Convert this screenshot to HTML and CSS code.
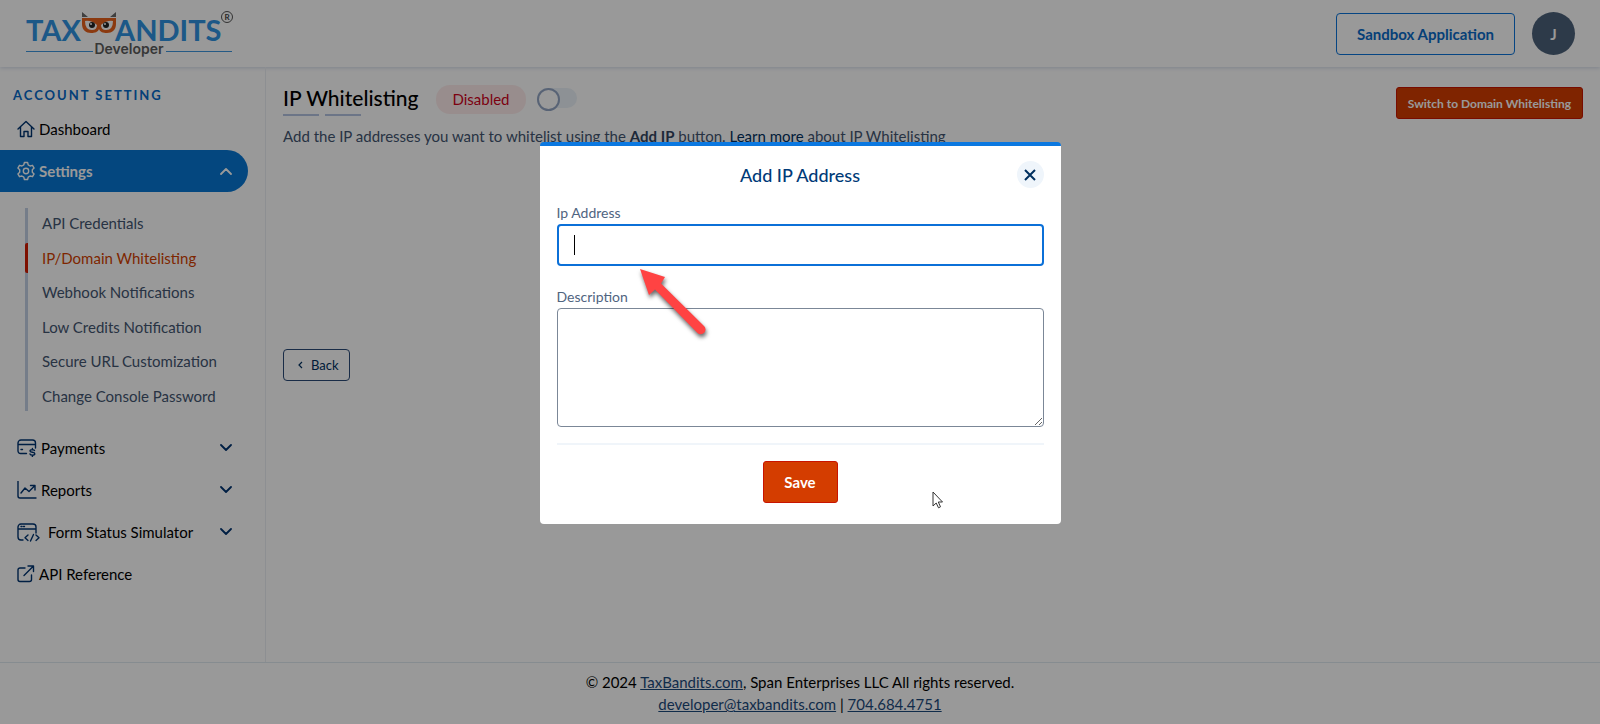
FILE: index.html
```html
<!DOCTYPE html>
<html lang="en">
<head>
<meta charset="utf-8">
<title>IP Whitelisting</title>
<link rel="stylesheet" href="styles.css">
</head>
<body>
<header class="header">
  <a class="logo" href="#" aria-label="TaxBandits Developer">
    <svg width="208" height="48" viewBox="0 0 208 48">
      <g class="logo-word"><text x="0" y="31">TAX</text><text x="89" y="31">ANDITS</text></g>
      <path d="M56 2l6 5h-6zM90 2l-6 5h6z" fill="#6b6b6b"/>
      <path d="M56 8h34v6c0 6-4 9-9 9-4 0-7-1-8-4-1 3-4 4-8 4-5 0-9-3-9-9z" fill="#e8611c"/>
      <path d="M59 11q6-1 12 4 0 5-5 5-7 0-7-9zM87 11q-6-1-12 4 0 5 5 5 7 0 7-9z" fill="#fff"/>
      <circle cx="66" cy="15" r="3" fill="#222"/><circle cx="80" cy="15" r="3" fill="#222"/>
      <circle cx="65" cy="14" r="1" fill="#fff"/><circle cx="79" cy="14" r="1" fill="#fff"/>
      <circle cx="201" cy="7" r="5.500" fill="none" stroke="#555"/>
      <text class="logo-mark" x="201" y="10" text-anchor="middle">R</text>
      <path d="M0 41.500h67M140 41.500h66" stroke="#3f97de"/>
      <text class="logo-sub" x="103" y="44" text-anchor="middle">Developer</text>
    </svg>
  </a>
  <div class="header-actions">
    <a class="btn-outline" href="#">Sandbox Application</a>
    <button class="avatar" type="button">J</button>
  </div>
</header>
<div class="body">
  <nav class="sidebar">
    <h2 class="side-title">ACCOUNT SETTING</h2>
    <a class="nav-item" href="#">
      <svg class="icon" width="18" height="18" viewBox="0 0 18 18"><path d="M1 9l8-7.500L17 9M3.500 7v9.500h3.500v-5h4v5h3.500V7"/></svg>
      <span>Dashboard</span></a>
    <a class="nav-item nav-active" href="#">
      <svg class="icon" width="18" height="20" viewBox="0 0 18 20"><path d="M7.400 1.500h3.200l.6 2.400 1.900 1.100 2.400-.7 1.600 2.800-1.800 1.700v2.400l1.800 1.700-1.600 2.800-2.400-.7-1.900 1.100-.6 2.400H7.400l-.6-2.400L4.900 15l-2.400.7-1.600-2.800 1.800-1.700V8.800L.9 7.100l1.600-2.800 2.400.7 1.900-1.100z"/><circle cx="9" cy="10" r="2.700"/></svg>
      <span>Settings</span>
      <svg class="icon chev" width="12" height="8" viewBox="0 0 12 8"><path d="M1 7l5-5 5 5"/></svg></a>
    <div class="submenu">
      <a href="#">API Credentials</a>
      <a class="sub-active" href="#">IP/Domain Whitelisting</a>
      <a href="#">Webhook Notifications</a>
      <a href="#">Low Credits Notification</a>
      <a href="#">Secure URL Customization</a>
      <a href="#">Change Console Password</a>
    </div>
    <a class="nav-item" href="#">
      <svg class="icon" width="20" height="18" viewBox="0 0 20 18"><path d="M9.500 14.500H4A2.500 2.500 0 0 1 1 12V4a3 3 0 0 1 3-3h11.500a3 3 0 0 1 3 3v5M1 5.500h17.500M4 10.500h1.500M17.500 11.500c-.5-1-4.500-1.500-4.500.5 0 1.800 4.800.8 4.800 2.700 0 1.900-4.300 1.700-4.800.3M15.400 9.500v1.200M15.400 16.200v1.500"/></svg>
      <span>Payments</span>
      <svg class="icon chev" width="12" height="8" viewBox="0 0 12 8"><path d="M1 1l5 5 5-5"/></svg></a>
    <a class="nav-item" href="#">
      <svg class="icon" width="20" height="18" viewBox="0 0 20 18"><path d="M1 0v15q0 2 2 2h16M4 12l4-5 4 3.500 6-6M13.500 4.500h4.500V9"/></svg>
      <span>Reports</span>
      <svg class="icon chev" width="12" height="8" viewBox="0 0 12 8"><path d="M1 1l5 5 5-5"/></svg></a>
    <a class="nav-item" href="#">
      <svg class="icon icon-wide" width="23" height="19" viewBox="0 0 23 19"><path d="M6 17H4a3 3 0 0 1-3-3V4a3 3 0 0 1 3-3h12a3 3 0 0 1 3 3v6M1 6h18M4 3.500h1M6.500 3.500h1M11 12l-3 2.700 3 2.700M19 12l3 2.700-3 2.700M16.500 11.500l-3 6.500"/></svg>
      <span>Form Status Simulator</span>
      <svg class="icon chev" width="12" height="8" viewBox="0 0 12 8"><path d="M1 1l5 5 5-5"/></svg></a>
    <a class="nav-item" href="#">
      <svg class="icon" width="18" height="18" viewBox="0 0 18 18"><path d="M8 3H3a2 2 0 0 0-2 2v9.500a2 2 0 0 0 2 2h9.500a2 2 0 0 0 2-2V10M11 1h5.500v5.500M16.500 1L7 10.500"/></svg>
      <span>API Reference</span></a>
  </nav>
  <main class="main">
    <div class="title-row">
      <h1 class="title">IP Whitelisting</h1>
      <label class="status" for="wl">Disabled</label>
      <input class="toggle" type="checkbox" id="wl">
      <button class="btn-red btn-switch" type="button">Switch to Domain Whitelisting</button>
    </div>
    <p class="desc">Add the IP addresses you want to whitelist using the <b>Add IP</b> button. <a href="#">Learn more</a> about IP Whitelisting</p>
    <button class="btn-back" type="button">
      <svg class="icon-back" width="5" height="8" viewBox="0 0 5 8"><path d="M4 1L1 4l3 3"/></svg>
      Back</button>
  </main>
</div>
<footer class="footer">
  <div>© 2024 <a href="#">TaxBandits.com</a>, Span Enterprises LLC All rights reserved.</div>
  <div><a href="#">developer@taxbandits.com</a> | <a href="#">704.684.4751</a></div>
</footer>
<div class="overlay">
  <form class="modal" role="dialog" aria-labelledby="mt">
    <div class="modal-head">
      <h2 class="modal-title" id="mt">Add IP Address</h2>
      <button class="close" type="button" aria-label="Close"><svg width="12" height="12" viewBox="0 0 12 12"><path d="M1 1l10 10M11 1L1 11"/></svg></button>
    </div>
    <label class="label" for="ip">Ip Address</label>
    <div class="field"><input class="input" id="ip" type="text"><span class="caret"></span></div>
    <label class="label" for="ds">Description</label>
    <textarea class="area" id="ds"></textarea>
    <div class="modal-foot"><button class="btn-red btn-save" type="button">Save</button></div>
    <svg class="arrow" width="80" height="78" viewBox="0 0 80 78"><path d="M4 3L29 11L25 17.500L68 60A4.500 4.500 0 0 1 61.500 67L19 23.500L13 29Z"/></svg>
    <svg class="cursor" width="12" height="18" viewBox="0 0 12 18"><path d="M1 1v14l3.200-3 2.300 4.800 2-1L6.300 11H10.500z"/></svg>
  </form>
</div>
</body>
</html>
```
FILE: styles.css
```css
* { box-sizing: border-box; }
body {
  margin: 0;
  min-height: 100vh;
  display: flex;
  flex-direction: column;
  background: #fff;
  color: #000;
  font-family: Lato, "Open Sans", sans-serif;
  font-size: 15px;
  line-height: 22px;
}
button, input, textarea { font-family: inherit; font-size: inherit; }
a { color: inherit; text-decoration: none; }

.header {
  display: flex;
  align-items: center;
  justify-content: space-between;
  height: 67px;
  padding: 0 25px 0 26px;
  box-shadow: 0 1px 4px #d3dcea;
}
.logo { display: flex; }
.logo-word { font-size: 29px; font-weight: 700; fill: #2f93e2; }
.logo-mark { font-size: 8px; font-weight: 700; fill: #444; }
.logo-sub { font-family: Inter, sans-serif; font-size: 14px; font-weight: 600; fill: #5c5c5c; }
.header-actions { display: flex; align-items: center; gap: 17px; }
.btn-outline {
  padding: 9px 20px;
  border: 1px solid #0a74da;
  border-radius: 4px;
  color: #0a6bc8;
  font-weight: 700;
}
.avatar {
  width: 43px;
  height: 43px;
  padding: 0;
  border: 0;
  border-radius: 50%;
  background: #4c617a;
  color: #fff;
  font-weight: 700;
}

.body { flex: 1; display: flex; }
.sidebar { width: 266px; padding-top: 17px; border-right: 1px solid #eceff4; }
.side-title {
  margin: 0 0 2px 13px;
  color: #0669c8;
  font-size: 13px;
  font-weight: 700;
  letter-spacing: 2px;
}
.nav-item {
  display: flex;
  align-items: center;
  gap: 4px;
  height: 42px;
  margin-right: 17px;
  padding: 0 16px 0 17px;
  font-size: 15px;
}
.icon { fill: none; stroke: #003471; stroke-width: 1.4; stroke-linecap: round; stroke-linejoin: round; }
.icon-wide { margin-right: 4px; }
.chev { margin-left: auto; stroke-width: 1.8; }
.nav-active { border-radius: 0 21px 21px 0; background: #0777d4; color: #fff; font-weight: 700; }
.nav-active .icon { stroke: #fff; }
.submenu {
  display: flex;
  flex-direction: column;
  justify-content: space-between;
  min-height: 203px;
  margin: 16px 0 16px 25px;
  border-left: 3px solid #c3d1e4;
  color: #435571;
}
.submenu a { margin-left: -3px; padding-left: 14px; border-left: 3px solid transparent; line-height: 30px; }
.submenu .sub-active { border-left-color: #d31b00; border-radius: 2px; color: #d33f00; }

.main { flex: 1; padding: 12px 17px 0 17px; }
.title-row { display: flex; align-items: center; min-height: 40px; }
.title {
  display: flex;
  flex-direction: column;
  margin: 0;
  font-size: 21px;
  font-weight: 500;
  line-height: 32px;
}
.title::after {
  content: "";
  width: 78px;
  height: 2px;
  background: linear-gradient(to right, #b4c4e2 36px, transparent 36px, transparent 42px, #b4c4e2 42px);
}
.status { margin-left: 18px; padding: 3px 16px; border-radius: 14px; background: #fdecec; color: #d0021b; line-height: 23px; }
.toggle {
  appearance: none;
  display: flex;
  width: 40px;
  height: 20px;
  margin: 0 0 2px 11px;
  border-radius: 10px;
  background: #ebf2f8;
}
.toggle::before { content: ""; width: 19px; height: 19px; border: 2px solid #93a5c4; border-radius: 50%; background: #fff; }
.btn-red { border: 1px solid #c81400; border-radius: 3px; background: #d43d00; color: #fff; font-weight: 700; }
.btn-switch { align-self: flex-end; margin-left: auto; padding: 0 11px; height: 32px; font-size: 12px; }
.desc { margin: 6px 0 0; color: #435571; }
.desc b { color: #33455f; }
.desc a { color: #003060; }
.btn-back {
  display: flex;
  align-items: center;
  gap: 8px;
  height: 32px;
  margin-top: 202px;
  padding: 0 10px 0 14px;
  border: 1px solid #2a4a77;
  border-radius: 4px;
  background: #fff;
  color: #003060;
  font-size: 13px;
}
.icon-back { fill: none; stroke: #003060; stroke-width: 1.2; }

.footer { padding: 8px 0 9px; border-top: 1px solid #dfeaf0; text-align: center; }
.footer a { color: #1c4a7c; text-decoration: underline; }

.overlay {
  position: fixed;
  inset: 0;
  display: flex;
  justify-content: center;
  align-items: flex-start;
  padding-top: 142px;
  background: rgba(0, 0, 0, .4);
}
.modal {
  position: relative;
  width: 521px;
  padding: 0 17px 21px;
  border-top: 4px solid #0b78e0;
  border-radius: 4px;
  background: #fff;
}
.modal-head { display: grid; grid-template-columns: 27px 1fr 27px; align-items: center; padding: 15px 0 14px; }
.modal-title { grid-column: 2; margin: 0; color: #003a78; font-size: 18px; font-weight: 500; line-height: 26px; text-align: center; }
.close {
  display: grid;
  place-items: center;
  width: 27px;
  height: 27px;
  padding: 0;
  border: 0;
  border-radius: 50%;
  background: #eff5fb;
}
.close svg { fill: none; stroke: #00305f; stroke-width: 2; }
.label { display: block; color: #50647f; font-size: 14px; line-height: 22px; }
.field { position: relative; margin-bottom: 20px; }
.input {
  display: block;
  width: 100%;
  height: 42px;
  padding: 0 16px;
  border: 2px solid #0b70d8;
  border-radius: 4px;
  outline: 0;
}
.caret { position: absolute; left: 17px; top: 11px; width: 1px; height: 20px; background: #000; }
.area { display: block; width: 100%; height: 119px; border: 1px solid #7b8797; border-radius: 4px; resize: vertical; }
.modal-foot { display: flex; justify-content: center; margin-top: 16px; padding-top: 16px; border-top: 2px solid #f0f5fa; }
.btn-save { width: 75px; height: 42px; }
.arrow { position: absolute; left: 96px; top: 120px; fill: #ff4343; filter: drop-shadow(1px 3px 2px rgba(0, 0, 0, .6)); }
.cursor { position: absolute; left: 392px; top: 345px; fill: #fff; stroke: #333; }
```
